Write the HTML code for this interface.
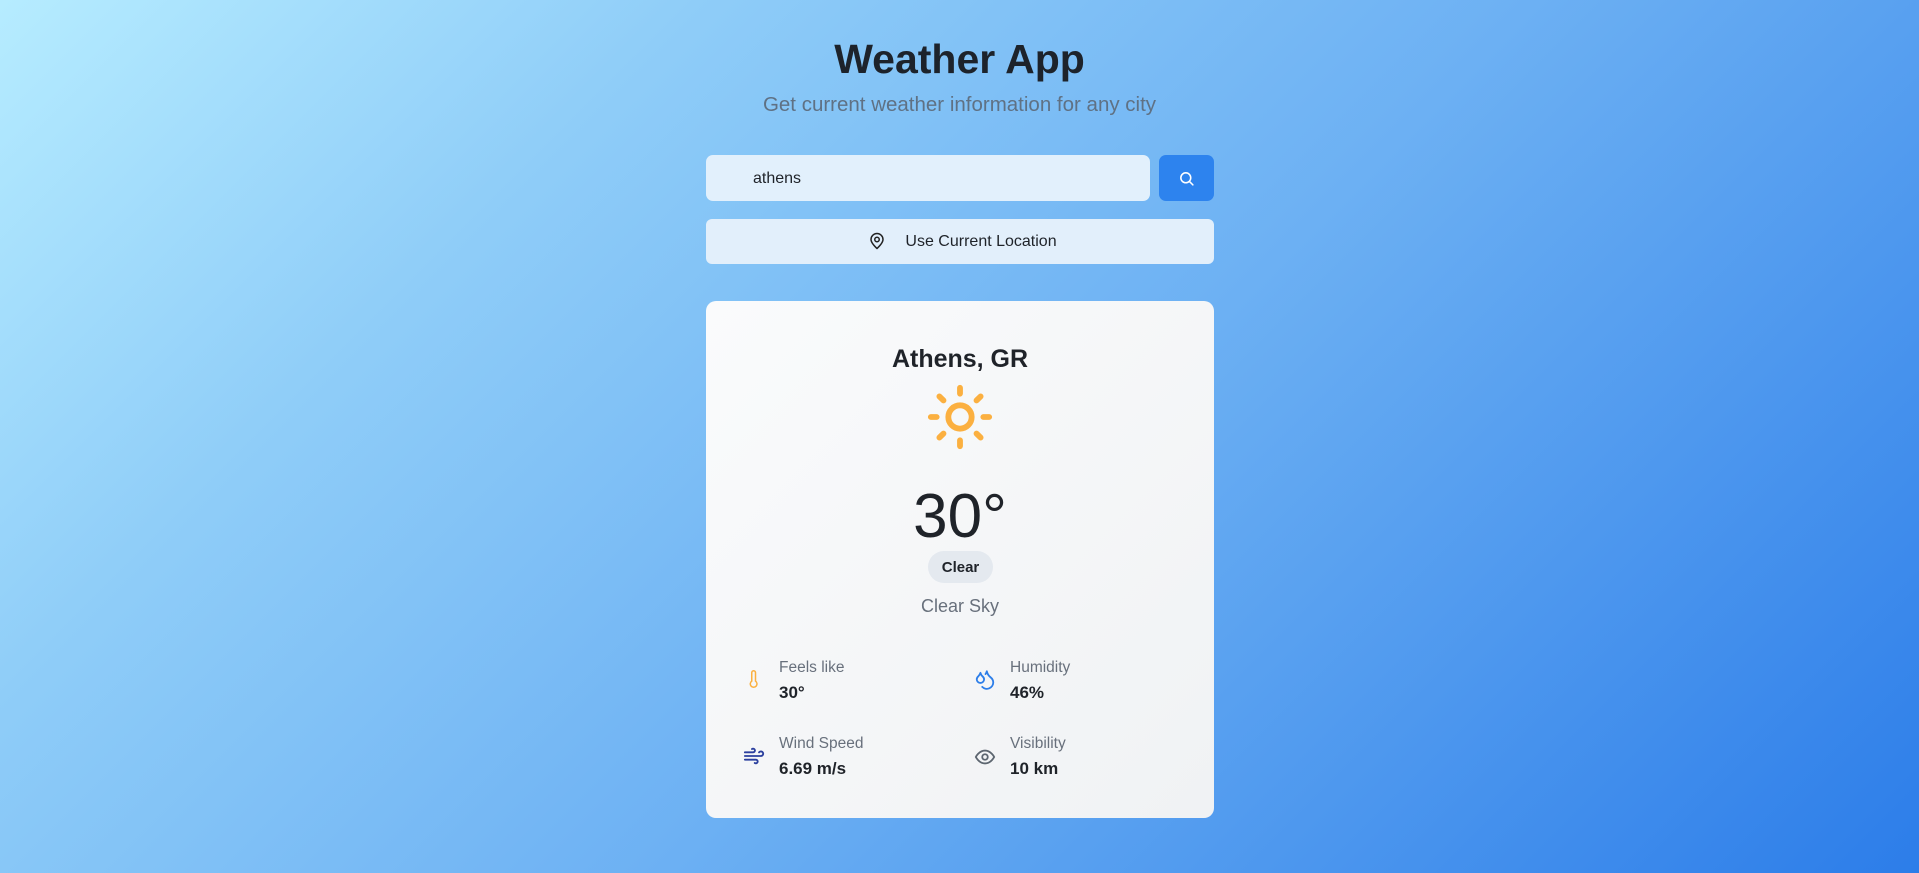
<!DOCTYPE html>
<html><head><meta charset="utf-8"><style>
*{box-sizing:border-box;margin:0;padding:0}
body{width:1919px;height:873px;overflow:hidden;font-family:"Liberation Sans","DejaVu Sans",sans-serif;background:linear-gradient(135deg,#b6ecff 0%,#8fcdf8 25%,#6cb0f3 55%,#2c7de9 100%);position:relative;color:#1f2329}
.abs{position:absolute}
h1{position:absolute;left:0;width:1919px;text-align:center;top:36px;font-size:41px;font-weight:bold;color:#1d232b}
.sub{position:absolute;left:0;width:1919px;text-align:center;top:93px;font-size:20.5px;color:#5f7184}
.input{left:706px;top:155px;width:444px;height:46px;border-radius:7px;background:#e2f0fc;font-size:16px;padding:15px 0 0 47px;color:#1f2329}
.sbtn{left:1159px;top:155px;width:55px;height:46px;border-radius:7px;background:#2d83ee}
.loc{left:706px;top:219px;width:508px;height:45px;border-radius:6px;background:#e2effb;font-size:16px;text-align:center;padding-top:14px}
.card{left:706px;top:301px;width:508px;height:517px;border-radius:10px;background:linear-gradient(135deg,#fafbfc,#f0f2f4)}
.c{position:absolute;left:0;width:508px;text-align:center}
.lbl{position:absolute;font-size:15.5px;color:#68707c}
.val{position:absolute;font-size:17px;font-weight:bold;color:#1f2329}
</style></head><body>
<h1>Weather App</h1>
<div class="sub">Get current weather information for any city</div>
<div class="abs input">athens</div>
<div class="abs sbtn"><svg class="abs" style="left:19px;top:15px" width="17" height="17" viewBox="0 0 24 24" fill="none" stroke="#fff" stroke-width="2.2" stroke-linecap="round"><circle cx="11" cy="11" r="7"/><path d="M16.5 16.5L21 21"/></svg></div>
<div class="abs loc"><svg style="position:absolute;left:162px;top:13px" width="18" height="18" viewBox="0 0 24 24" fill="none" stroke="#222" stroke-width="2" stroke-linecap="round" stroke-linejoin="round"><path d="M20 10c0 5-8 12-8 12s-8-7-8-12a8 8 0 0 1 16 0z"/><circle cx="12" cy="10" r="3"/></svg><span style="margin-left:42px">Use Current Location</span></div>
<div class="abs card">
 <div class="c" style="top:44px;font-size:25px;font-weight:bold">Athens, GR</div>
 <svg class="abs" style="left:219px;top:81px" width="70" height="70" viewBox="0 0 24 24" fill="none" stroke="#fbb040" stroke-width="2" stroke-linecap="round"><circle cx="12" cy="12" r="4"/><path d="M12 2v2M12 20v2M4.93 4.93l1.41 1.41M17.66 17.66l1.41 1.41M2 12h2M20 12h2M6.34 17.66l-1.41 1.41M19.07 4.93l-1.41 1.41"/></svg>
 <div class="c" style="top:180px;font-size:62px;font-weight:300;color:#1f2329">30°</div>
 <div class="abs" style="left:222px;top:250px;width:65px;height:32px;border-radius:16px;background:#e4e9ef;font-size:15px;font-weight:bold;text-align:center;padding-top:8px">Clear</div>
 <div class="c" style="top:295px;font-size:18px;color:#68707c">Clear Sky</div>
 <svg class="abs" style="left:39px;top:367px" width="18" height="22" viewBox="0 0 24 24" fill="none" stroke="#fbb040" stroke-width="2" stroke-linecap="round"><path d="M14 14.76V3.5a2.5 2.5 0 0 0-5 0v11.26a4.5 4.5 0 1 0 5 0z"/></svg>
 <div class="lbl" style="left:73px;top:358px">Feels like</div><div class="val" style="left:73px;top:382px">30°</div>
 <svg class="abs" style="left:268px;top:367px" width="22" height="22" viewBox="0 0 24 24" fill="none" stroke="#2d7ee9" stroke-width="2" stroke-linecap="round" stroke-linejoin="round"><path d="M7 16.3c2.2 0 4-1.8 4-4 0-1.2-.6-2.3-1.8-3.3S7.4 6.6 7 5.3c-.4 1.3-1 2.5-2.2 3.6S3 11.1 3 12.3c0 2.2 1.8 4 4 4z"/><path d="M12.6 6.6A11 11 0 0 0 14 3.6c.5 2.5 2 4.9 4 6.5s3 3.5 3 5.5a7 7 0 0 1-12 5"/></svg>
 <div class="lbl" style="left:304px;top:358px">Humidity</div><div class="val" style="left:304px;top:382px">46%</div>
 <svg class="abs" style="left:36px;top:444px" width="24" height="22" viewBox="0 0 24 24" fill="none" stroke="#2b3f9e" stroke-width="2" stroke-linecap="round"><path d="M12.8 19.6A2 2 0 1 0 14 16H2M17.5 8a2.5 2.5 0 1 1 2 4H2M9.8 4.4A2 2 0 1 1 11 8H2"/></svg>
 <div class="lbl" style="left:73px;top:434px">Wind Speed</div><div class="val" style="left:73px;top:458px">6.69 m/s</div>
 <svg class="abs" style="left:267px;top:445px" width="24" height="22" viewBox="0 0 24 24" fill="none" stroke="#5d6670" stroke-width="2" stroke-linecap="round"><path d="M2 12s3.5-7 10-7 10 7 10 7-3.5 7-10 7S2 12 2 12z"/><circle cx="12" cy="12" r="3"/></svg>
 <div class="lbl" style="left:304px;top:434px">Visibility</div><div class="val" style="left:304px;top:458px">10 km</div>
</div>
</body></html>
